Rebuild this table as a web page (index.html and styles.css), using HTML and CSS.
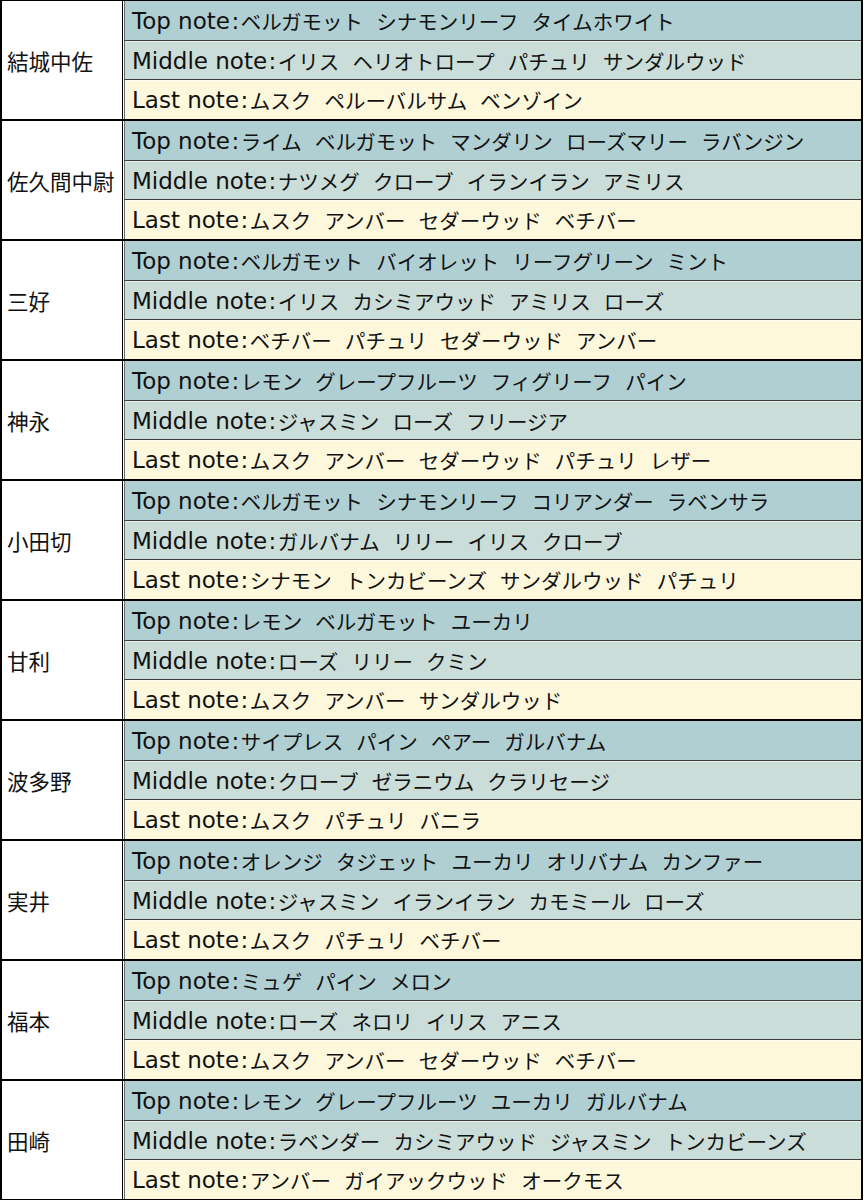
FILE: index.html
```html
<!DOCTYPE html>
<html lang="ja">
<head>
<meta charset="utf-8">
<link rel="stylesheet" href="styles.css">
</head>
<body>
<div class="table">
  <div class="group">
    <div class="name">結城中佐</div>
    <div class="notes">
      <div class="note top"><span class="label">Top note<span class="colon">:</span></span><span class="items">ベルガモット シナモンリーフ タイムホワイト</span></div>
      <div class="note mid"><span class="label">Middle note<span class="colon">:</span></span><span class="items">イリス ヘリオトロープ パチュリ サンダルウッド</span></div>
      <div class="note last"><span class="label">Last note<span class="colon">:</span></span><span class="items">ムスク ペルーバルサム ベンゾイン</span></div>
    </div>
  </div>
  <div class="group">
    <div class="name">佐久間中尉</div>
    <div class="notes">
      <div class="note top"><span class="label">Top note<span class="colon">:</span></span><span class="items">ライム ベルガモット マンダリン ローズマリー ラバンジン</span></div>
      <div class="note mid"><span class="label">Middle note<span class="colon">:</span></span><span class="items">ナツメグ クローブ イランイラン アミリス</span></div>
      <div class="note last"><span class="label">Last note<span class="colon">:</span></span><span class="items">ムスク アンバー セダーウッド ベチバー</span></div>
    </div>
  </div>
  <div class="group">
    <div class="name">三好</div>
    <div class="notes">
      <div class="note top"><span class="label">Top note<span class="colon">:</span></span><span class="items">ベルガモット バイオレット リーフグリーン ミント</span></div>
      <div class="note mid"><span class="label">Middle note<span class="colon">:</span></span><span class="items">イリス カシミアウッド アミリス ローズ</span></div>
      <div class="note last"><span class="label">Last note<span class="colon">:</span></span><span class="items">ベチバー パチュリ セダーウッド アンバー</span></div>
    </div>
  </div>
  <div class="group">
    <div class="name">神永</div>
    <div class="notes">
      <div class="note top"><span class="label">Top note<span class="colon">:</span></span><span class="items">レモン グレープフルーツ フィグリーフ パイン</span></div>
      <div class="note mid"><span class="label">Middle note<span class="colon">:</span></span><span class="items">ジャスミン ローズ フリージア</span></div>
      <div class="note last"><span class="label">Last note<span class="colon">:</span></span><span class="items">ムスク アンバー セダーウッド パチュリ レザー</span></div>
    </div>
  </div>
  <div class="group">
    <div class="name">小田切</div>
    <div class="notes">
      <div class="note top"><span class="label">Top note<span class="colon">:</span></span><span class="items">ベルガモット シナモンリーフ コリアンダー ラベンサラ</span></div>
      <div class="note mid"><span class="label">Middle note<span class="colon">:</span></span><span class="items">ガルバナム リリー イリス クローブ</span></div>
      <div class="note last"><span class="label">Last note<span class="colon">:</span></span><span class="items">シナモン トンカビーンズ サンダルウッド パチュリ</span></div>
    </div>
  </div>
  <div class="group">
    <div class="name">甘利</div>
    <div class="notes">
      <div class="note top"><span class="label">Top note<span class="colon">:</span></span><span class="items">レモン ベルガモット ユーカリ</span></div>
      <div class="note mid"><span class="label">Middle note<span class="colon">:</span></span><span class="items">ローズ リリー クミン</span></div>
      <div class="note last"><span class="label">Last note<span class="colon">:</span></span><span class="items">ムスク アンバー サンダルウッド</span></div>
    </div>
  </div>
  <div class="group">
    <div class="name">波多野</div>
    <div class="notes">
      <div class="note top"><span class="label">Top note<span class="colon">:</span></span><span class="items">サイプレス パイン ペアー ガルバナム</span></div>
      <div class="note mid"><span class="label">Middle note<span class="colon">:</span></span><span class="items">クローブ ゼラニウム クラリセージ</span></div>
      <div class="note last"><span class="label">Last note<span class="colon">:</span></span><span class="items">ムスク パチュリ バニラ</span></div>
    </div>
  </div>
  <div class="group">
    <div class="name">実井</div>
    <div class="notes">
      <div class="note top"><span class="label">Top note<span class="colon">:</span></span><span class="items">オレンジ タジェット ユーカリ オリバナム カンファー</span></div>
      <div class="note mid"><span class="label">Middle note<span class="colon">:</span></span><span class="items">ジャスミン イランイラン カモミール ローズ</span></div>
      <div class="note last"><span class="label">Last note<span class="colon">:</span></span><span class="items">ムスク パチュリ ベチバー</span></div>
    </div>
  </div>
  <div class="group">
    <div class="name">福本</div>
    <div class="notes">
      <div class="note top"><span class="label">Top note<span class="colon">:</span></span><span class="items">ミュゲ パイン メロン</span></div>
      <div class="note mid"><span class="label">Middle note<span class="colon">:</span></span><span class="items">ローズ ネロリ イリス アニス</span></div>
      <div class="note last"><span class="label">Last note<span class="colon">:</span></span><span class="items">ムスク アンバー セダーウッド ベチバー</span></div>
    </div>
  </div>
  <div class="group">
    <div class="name">田崎</div>
    <div class="notes">
      <div class="note top"><span class="label">Top note<span class="colon">:</span></span><span class="items">レモン グレープフルーツ ユーカリ ガルバナム</span></div>
      <div class="note mid"><span class="label">Middle note<span class="colon">:</span></span><span class="items">ラベンダー カシミアウッド ジャスミン トンカビーンズ</span></div>
      <div class="note last"><span class="label">Last note<span class="colon">:</span></span><span class="items">アンバー ガイアックウッド オークモス</span></div>
    </div>
  </div>
</div>
</body>
</html>
```

FILE: styles.css
```css
html, body {
  margin: 0;
  padding: 0;
  background: #fff;
}
body {
  font-family: "Noto Sans CJK JP", "Noto Sans", sans-serif;
  color: #111;
}
.table {
  width: 863px;
  box-sizing: border-box;
  border-top: 1px solid #000;
  border-left: 2px solid #000;
  border-right: 2px solid #000;
}
.group {
  display: flex;
  height: 120px;
  box-sizing: border-box;
  border-bottom: 2px solid #000;
}
.name {
  width: 121px;
  flex: none;
  box-sizing: border-box;
  border-right: 1px solid #000;
  display: flex;
  align-items: center;
  padding-left: 5px;
  font-size: 21.5px;
  white-space: nowrap;
}
.notes {
  flex: 1;
  display: flex;
  flex-direction: column;
  padding-left: 1px;
}
.note {
  flex: 1;
  display: flex;
  align-items: center;
  padding-left: 7px;
  padding-top: 1px;
  white-space: nowrap;
  border-left: 1px solid #6a6a6a;
  box-sizing: border-box;
}
.note + .note {
  border-top: 1px solid #3c3c3c;
  box-shadow: inset 0 1px 0 rgba(255,255,255,0.55);
}
.label {
  font-family: "DejaVu Sans", sans-serif;
  font-size: 23px;
}
.colon {
  padding: 0 1.5px 0 1.5px;
}
.items {
  font-family: "Noto Sans CJK JP", sans-serif;
  font-size: 20.5px;
  word-spacing: 8.5px;
}
.top { background: #b0cfd3; }
.mid { background: #cbddd8; }
.last { background: #fdf8dc; }
```
